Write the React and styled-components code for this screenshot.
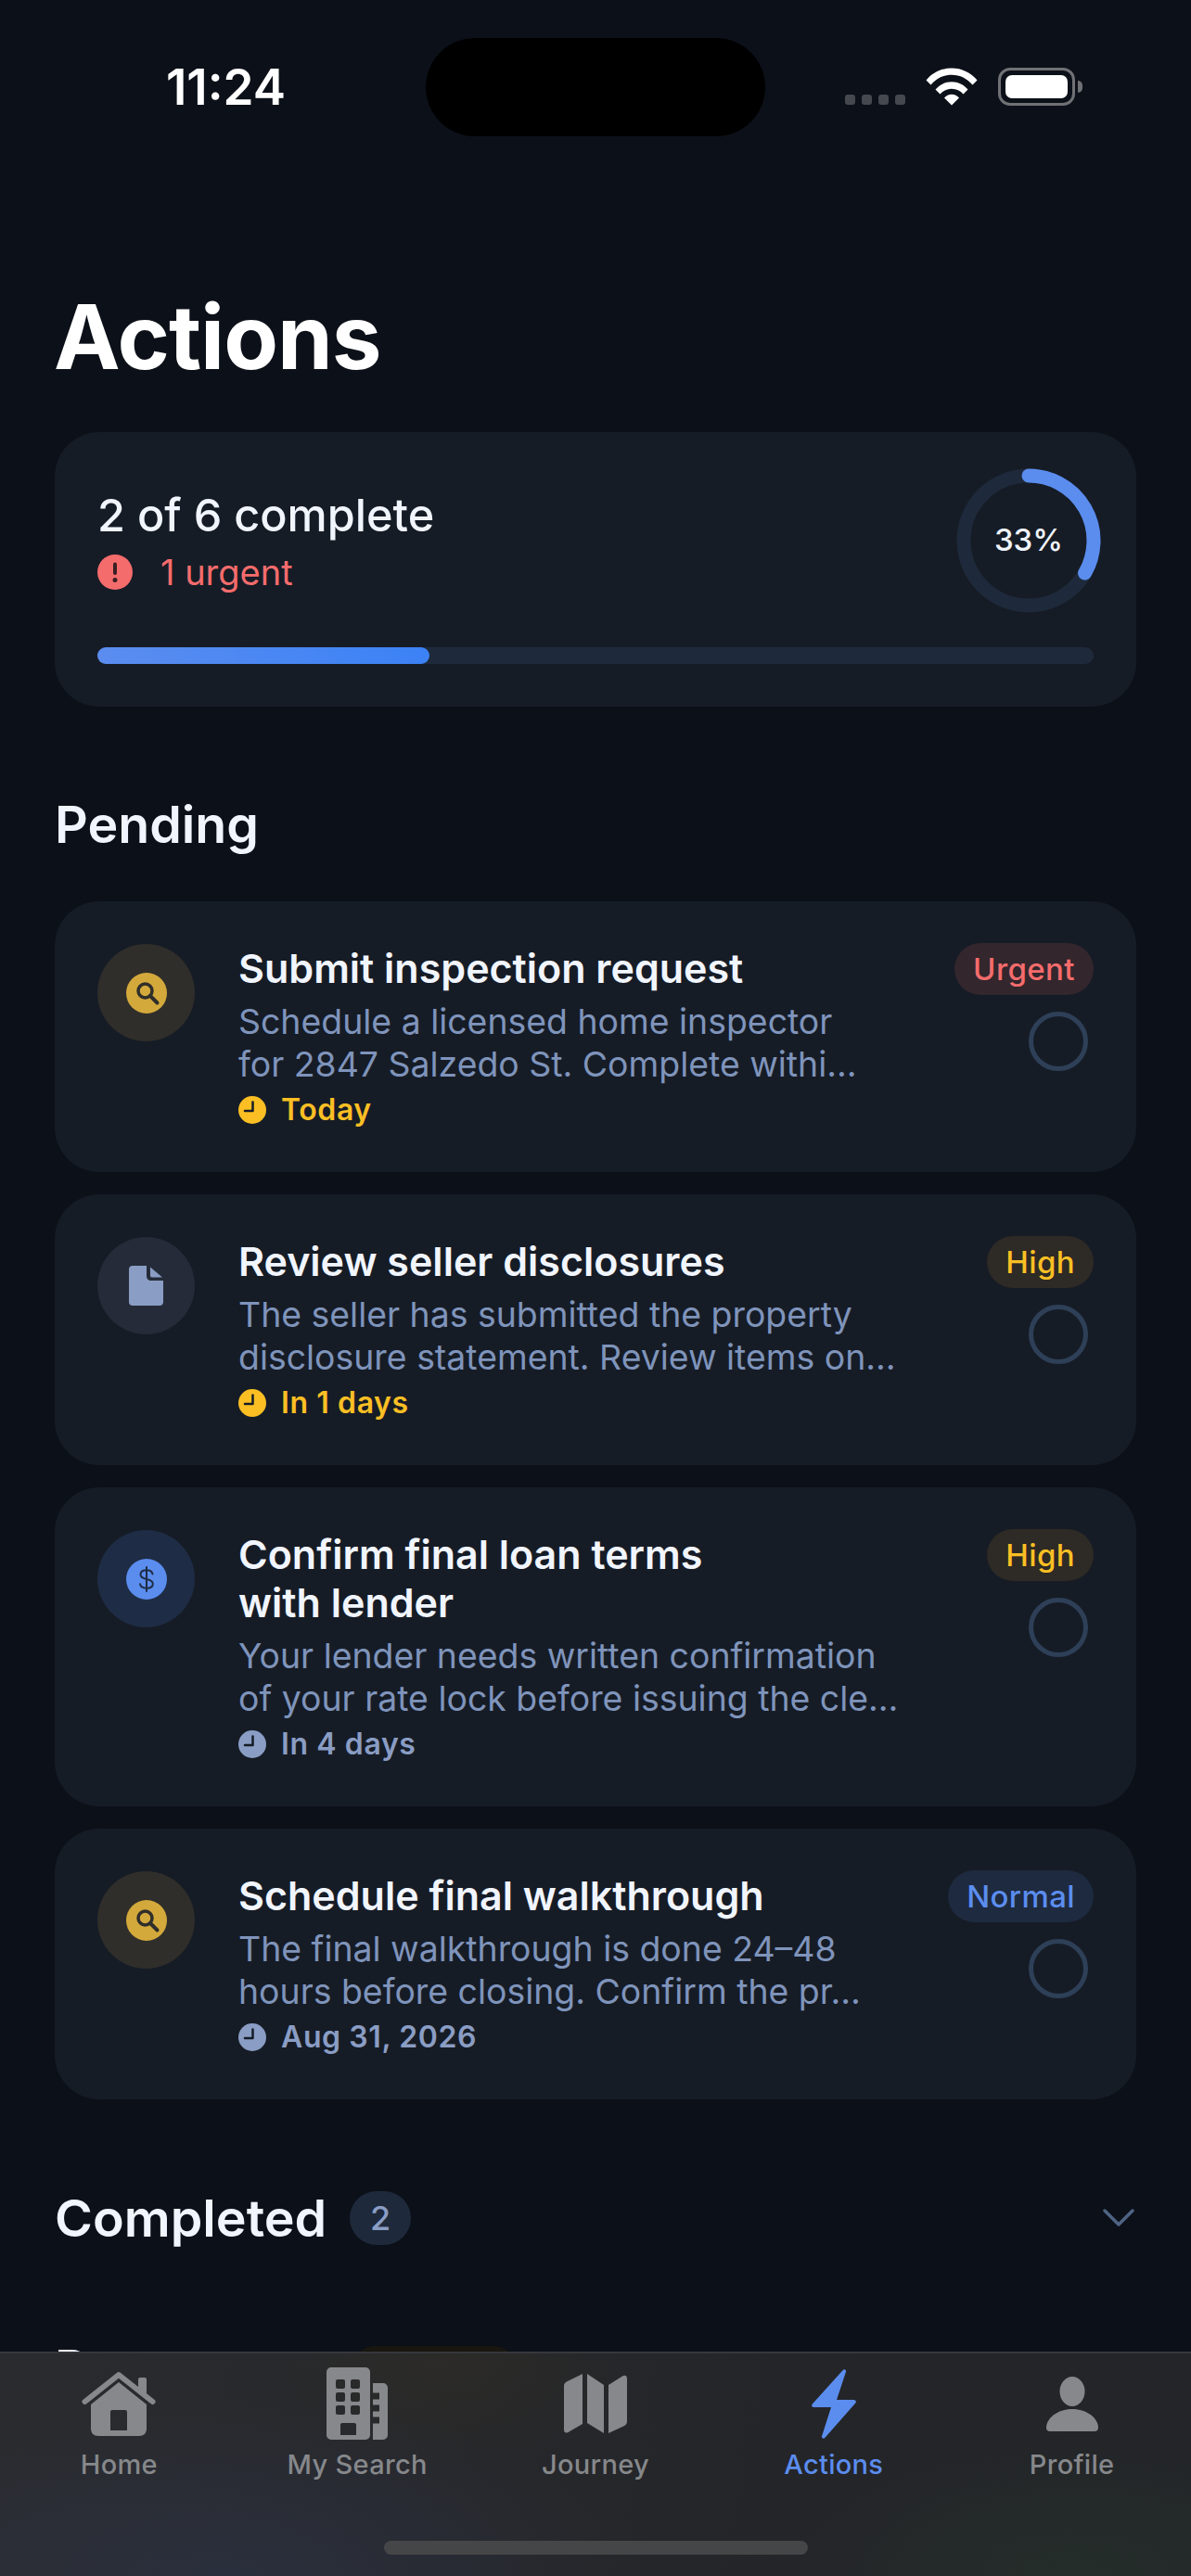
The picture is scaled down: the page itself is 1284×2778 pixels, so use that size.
import React from "react";
import styled, { createGlobalStyle } from "styled-components";

const GlobalStyle = createGlobalStyle`
  html, body {
    margin: 0;
    padding: 0;
    background: #0c1018;
  }
  * {
    box-sizing: border-box;
  }
`;

const Screen = styled.div`
  position: relative;
  width: 1284px;
  height: 2778px;
  overflow: hidden;
  background: #0c1018;
  color: #f1f5fd;
  font-family: Inter, "Noto Sans", sans-serif;
`;

const StatusBar = styled.div`
  display: flex;
  height: 147px;
  padding-top: 41px;
`;

const Time = styled.div`
  width: 459px;
  height: 106px;
  padding-left: 28px;
  display: flex;
  align-items: center;
  justify-content: center;
  font-size: 53px;
  font-weight: 600;
  color: #fff;
`;

const Island = styled.div`
  width: 366px;
  height: 106px;
  border-radius: 53px;
  background: #000;
`;

const StatusIcons = styled.div`
  display: flex;
  align-items: flex-start;
  padding: 32px 0 0 86px;
`;

const Dots = styled.div`
  display: flex;
  gap: 7px;
  margin-top: 29px;
  margin-right: 22px;
`;

const Dot = styled.span`
  width: 11px;
  height: 11px;
  border-radius: 3px;
  background: #45484e;
`;

const Battery = styled.div`
  position: relative;
  width: 83px;
  height: 41px;
  margin-left: 22px;
  padding: 5px;
  border: 3px solid #6f7175;
  border-radius: 13px;

  &::before {
    content: "";
    display: block;
    height: 100%;
    border-radius: 7px;
    background: #fff;
  }

  &::after {
    content: "";
    position: absolute;
    right: -11px;
    top: 11px;
    width: 5px;
    height: 13px;
    border-radius: 0 5px 5px 0;
    background: #6f7175;
  }
`;

const Main = styled.main`
  padding: 0 59px;
`;

const Title = styled.h1`
  margin: 158px 0 0 -1px;
  font-size: 96px;
  line-height: 116px;
  font-weight: 700;
  color: #fff;
  letter-spacing: -1px;
`;

const Card = styled.div`
  background: #161c26;
  border-radius: 48px;
`;

const Summary = styled(Card)`
  margin-top: 45px;
  height: 296px;
  padding: 39px 46px 0;
`;

const SummaryTop = styled.div`
  display: flex;
  justify-content: space-between;
  align-items: flex-start;
`;

const SummaryText = styled.div`
  padding-top: 22px;
`;

const SummaryCount = styled.div`
  font-size: 48.6px;
  line-height: 58px;
  font-weight: 500;
`;

const UrgentLine = styled.div`
  display: flex;
  align-items: center;
  gap: 30px;
  margin-top: 8px;
  font-size: 38px;
  line-height: 48px;
  color: #f56c6c;
`;

const Ring = styled.div`
  position: relative;
  width: 156px;
  height: 156px;
  margin-right: -8px;
`;

const RingLabel = styled.div`
  position: absolute;
  inset: 0;
  padding-bottom: 2px;
  display: flex;
  align-items: center;
  justify-content: center;
  font-size: 33px;
  font-weight: 500;
`;

const Track = styled.div`
  height: 18px;
  margin-top: 37px;
  border-radius: 9px;
  background: #1e2a3b;
`;

const TrackFill = styled.div`
  height: 100%;
  border-radius: 9px;
  background: linear-gradient(90deg, #5b8def, #3b82f6);
`;

const SectionTitle = styled.h2`
  margin: 0;
  font-size: 55.5px;
  line-height: 72px;
  font-weight: 600;
  color: #f1f5fd;
`;

const PendingTitle = styled(SectionTitle)`
  margin-top: 91px;
`;

const TaskList = styled.div`
  display: flex;
  flex-direction: column;
  gap: 24px;
  margin-top: 47px;
`;

const TaskCard = styled(Card)`
  display: flex;
  padding: 46px;
`;

const TaskIcon = styled.div`
  flex: none;
  display: flex;
  align-items: center;
  justify-content: center;
  width: 105px;
  height: 105px;
  border-radius: 50%;
  background: ${(p) => p.$bg};
`;

const TaskBody = styled.div`
  flex: none;
  width: 707px;
  margin-left: 47px;
`;

const TaskTitle = styled.div`
  max-width: 585px;
  font-size: 43px;
  line-height: 52px;
  font-weight: 600;
  color: #f1f5fd;
`;

const TaskDesc = styled.div`
  margin-top: 9px;
  font-size: 37.4px;
  line-height: 46px;
  color: #7f94bb;
`;

const DescLine = styled.div`
  white-space: nowrap;
`;

const Due = styled.div`
  display: flex;
  align-items: center;
  gap: 16px;
  margin-top: 5px;
  font-size: 32px;
  line-height: 42px;
  font-weight: 600;
  letter-spacing: 0.6px;
  color: ${(p) => p.$color};
`;

const TaskSide = styled.div`
  flex: 1;
  display: flex;
  flex-direction: column;
  align-items: flex-end;
`;

const Badge = styled.div`
  height: 56px;
  margin-top: -1px;
  padding: 0 20px;
  border-radius: 28px;
  display: flex;
  align-items: center;
  font-size: 33px;
  font-weight: 500;
  letter-spacing: 0.4px;
  color: ${(p) => p.$color};
  background: ${(p) => p.$bg};
`;

const Check = styled.div`
  width: 64px;
  height: 64px;
  margin: 18px 6px 0 0;
  border: 5px solid #2e4058;
  border-radius: 50%;
`;

const CompletedRow = styled.div`
  display: flex;
  align-items: center;
  margin-top: 92px;
`;

const CountPill = styled.div`
  display: flex;
  align-items: center;
  justify-content: center;
  width: 66px;
  height: 58px;
  margin-left: 25px;
  border-radius: 29px;
  background: #1e2a3b;
  color: #8a9dc4;
  font-size: 36px;
  font-weight: 500;
`;

const Chevron = styled.div`
  margin-left: auto;
  margin-right: 2px;
  display: flex;
  color: #4f6484;
`;

const DocumentsRow = styled.div`
  display: flex;
  align-items: center;
  margin-top: 90px;
`;

const DocumentsBadge = styled.div`
  width: 176px;
  height: 48px;
  margin-left: 14px;
  border-radius: 24px;
  background: #18160f;
`;

const TabBar = styled.nav`
  position: absolute;
  left: 0;
  right: 0;
  bottom: 0;
  height: 242px;
  display: grid;
  grid-template-columns: repeat(5, 1fr);
  align-items: start;
  padding-top: 15px;
  border-top: 2px solid #35373b;
  background:
    radial-gradient(200px 130px at 483px 0, rgba(70, 58, 20, 0.14), transparent),
    radial-gradient(460px 190px at 240px 100%, rgba(48, 62, 100, 0.3), transparent),
    radial-gradient(320px 150px at 1160px 100%, rgba(40, 72, 50, 0.24), transparent),
    linear-gradient(100deg, #2a2b2e, #242528 70%, #232528);
`;

const Tab = styled.div`
  display: flex;
  flex-direction: column;
  align-items: center;
  color: ${(p) => (p.$active ? "#5b8def" : "#86888b")};
`;

const TabIcon = styled.div`
  height: 78px;
  display: flex;
  align-items: center;
  justify-content: center;
`;

const TabLabel = styled.div`
  margin-top: 7px;
  font-size: 29px;
  line-height: 40px;
  font-weight: 500;
  letter-spacing: 0.3px;
`;

const HomeIndicator = styled.div`
  position: absolute;
  left: 414px;
  bottom: 23px;
  width: 457px;
  height: 15px;
  border-radius: 8px;
  background: #454648;
`;

const WifiIcon = () => (
  <svg width="56" height="41" viewBox="0 0 56 41" fill="#fff">
    <path d="M0.5 13.5C7.5 5.2 17 0.5 28 0.5s20.5 4.700 27.500 13l-5 5C44.700 11.700 37 7.700 28 7.700S11.300 11.700 5.500 18.500z" />
    <path d="M10.500 23.500C15 18.200 21 15.200 28 15.200s13 3 17.500 8.300l-5 5C37.200 24.800 33 22.700 28 22.700s-9.200 2.100-12.500 5.800z" />
    <path d="M20 32.500c2-2.300 4.900-3.800 8-3.800s6 1.500 8 3.800l-8 8z" />
  </svg>
);

const AlertIcon = () => (
  <svg width="38" height="38" viewBox="0 0 38 38">
    <circle cx="19" cy="19" r="19" fill="#f56c6c" />
    <rect x="17" y="8.500" width="4" height="13.500" rx="2" fill="#3a1f24" />
    <circle cx="19" cy="27.500" r="2.500" fill="#3a1f24" />
  </svg>
);

const ProgressRing = () => (
  <svg width="156" height="156" viewBox="0 0 156 156" fill="none">
    <circle cx="78" cy="78" r="70" stroke="#1e2a3b" strokeWidth="15" />
    <path d="M78 8A70 70 0 0 1 138.600 113" stroke="#5b8def" strokeWidth="15" strokeLinecap="round" />
  </svg>
);

const SearchIcon = () => (
  <svg width="44" height="44" viewBox="0 0 44 44" fill="none">
    <circle cx="22" cy="22" r="22" fill="#d4a93c" />
    <circle cx="20.500" cy="19.500" r="7.500" stroke="#2f2e2a" strokeWidth="3.500" />
    <path d="M26 25l7.500 7.500" stroke="#2f2e2a" strokeWidth="4" strokeLinecap="round" />
  </svg>
);

const DocIcon = () => (
  <svg width="37" height="43" viewBox="0 0 37 43" fill="#8a9dc4">
    <path d="M4 0h15v11c0 3 2 5 5 5h13v23c0 2.500-1.500 4-4 4H4c-2.500 0-4-1.500-4-4V4c0-2.500 1.500-4 4-4z" />
    <path d="M23 1.500L36 12.500H25c-1.300 0-2-.7-2-2z" />
  </svg>
);

const DollarIcon = () => (
  <svg width="44" height="44" viewBox="0 0 44 44" fill="none">
    <circle cx="22" cy="22" r="22" fill="#5b8def" />
    <path
      d="M28.500 16.500c-.5-2.700-3-4.200-6.500-4.200-3.800 0-6.500 1.800-6.500 4.800 0 3 2.500 4.100 6.500 4.900s6.800 1.900 6.800 5c0 3.100-2.900 4.800-6.800 4.800-3.800 0-6.500-1.700-7-4.600M22 9v26"
      stroke="#1e2c45"
      strokeWidth="2"
      strokeLinecap="round"
    />
  </svg>
);

const ClockIcon = ({ color }) => (
  <svg width="30" height="30" viewBox="0 0 30 30" fill="none">
    <circle cx="15" cy="15" r="15" fill={color} />
    <path d="M15.500 6.500v9.500H7" stroke="#161c26" strokeWidth="2.500" strokeLinecap="round" strokeLinejoin="round" />
  </svg>
);

const ChevronDown = () => (
  <svg width="34" height="22" viewBox="0 0 34 22" fill="none">
    <path d="M2 3l15 15L32 3" stroke="currentColor" strokeWidth="3.500" strokeLinecap="round" strokeLinejoin="round" />
  </svg>
);

const HomeGlyph = () => (
  <svg width="80" height="70" viewBox="0 0 80 70" fill="currentColor">
    <path d="M3.500 33L40 4l36.500 29" fill="none" stroke="currentColor" strokeWidth="6" strokeLinecap="round" strokeLinejoin="round" />
    <rect x="61" y="7" width="9" height="18" rx="2" />
    <path
      fillRule="evenodd"
      d="M40 12l30 24v26c0 5-3 8-8 8H18c-5 0-8-3-8-8V36zM33 42a2 2 0 0 0-2 2v20h18V44a2 2 0 0 0-2-2z"
    />
  </svg>
);

const BuildingGlyph = () => (
  <svg width="66" height="78" viewBox="0 0 66 78" fill="currentColor">
    <path
      fillRule="evenodd"
      d="M5 0h37a5 5 0 0 1 5 5v68a5 5 0 0 1-5 5H5a5 5 0 0 1-5-5V5a5 5 0 0 1 5-5zM12 13a2 2 0 0 0-2 2v6a2 2 0 0 0 2 2h6a2 2 0 0 0 2-2v-6a2 2 0 0 0-2-2zM28 13a2 2 0 0 0-2 2v6a2 2 0 0 0 2 2h6a2 2 0 0 0 2-2v-6a2 2 0 0 0-2-2zM12 27a2 2 0 0 0-2 2v6a2 2 0 0 0 2 2h6a2 2 0 0 0 2-2v-6a2 2 0 0 0-2-2zM28 27a2 2 0 0 0-2 2v6a2 2 0 0 0 2 2h6a2 2 0 0 0 2-2v-6a2 2 0 0 0-2-2zM12 41a2 2 0 0 0-2 2v6a2 2 0 0 0 2 2h6a2 2 0 0 0 2-2v-6a2 2 0 0 0-2-2zM28 41a2 2 0 0 0-2 2v6a2 2 0 0 0 2 2h6a2 2 0 0 0 2-2v-6a2 2 0 0 0-2-2zM17 60a2 2 0 0 0-2 2v11h17V62a2 2 0 0 0-2-2z"
    />
    <path
      fillRule="evenodd"
      d="M50 17h11a5 5 0 0 1 5 5v51a5 5 0 0 1-5 5H50V60.500h7v-7h-7v-6h7v-7h-7v-6h7v-7h-7z"
    />
  </svg>
);

const MapGlyph = () => (
  <svg width="68" height="64" viewBox="0 0 68 64" fill="currentColor">
    <path d="M20 0v54L4.500 63C2 64.500 0 63 0 60.500V13.500c0-2.500.8-3.800 2.800-5z" />
    <path d="M25 0l18 12v52L25 53z" />
    <path d="M48 12L63 2.500C65.800.8 68 2 68 5v46c0 2.500-.8 3.800-2.800 5L48 64z" />
  </svg>
);

const BoltGlyph = () => (
  <svg width="48" height="75" viewBox="0 0 48 75" fill="currentColor">
    <path d="M33.500 1.200C35 -.5 37.500.5 37 2.800L27 33h18.500c2 0 3 2 1.800 3.600L14.500 73.800c-1.600 1.700-4 .6-3.500-1.600L21 41H2.500C.5 41-.5 39 .8 37.400z" />
  </svg>
);

const PersonGlyph = () => (
  <svg width="56" height="59" viewBox="0 0 56 59" fill="currentColor">
    <ellipse cx="28" cy="16" rx="13.500" ry="16" />
    <path d="M28 35c16 0 28 10 28 20 0 2.500-1.500 4-4 4H4c-2.500 0-4-1.500-4-4 0-10 12-20 28-20z" />
  </svg>
);

const tasks = [
  {
    title: "Submit inspection request",
    desc: ["Schedule a licensed home inspector", "for 2847 Salzedo St. Complete withi…"],
    due: "Today",
    dueColor: "#fbbf24",
    iconBg: "#2f2e2a",
    icon: <SearchIcon />,
    badge: "Urgent",
    badgeColor: "#f56c6c",
    badgeBg: "#33262d",
  },
  {
    title: "Review seller disclosures",
    desc: ["The seller has submitted the property", "disclosure statement. Review items on…"],
    due: "In 1 days",
    dueColor: "#fbbf24",
    iconBg: "#252b38",
    icon: <DocIcon />,
    badge: "High",
    badgeColor: "#fbbf24",
    badgeBg: "#2e2a25",
  },
  {
    title: "Confirm final loan terms with lender",
    desc: ["Your lender needs written confirmation", "of your rate lock before issuing the cle…"],
    due: "In 4 days",
    dueColor: "#8a9dc4",
    iconBg: "#1e2c45",
    icon: <DollarIcon />,
    badge: "High",
    badgeColor: "#fbbf24",
    badgeBg: "#2e2a25",
  },
  {
    title: "Schedule final walkthrough",
    desc: ["The final walkthrough is done 24–48", "hours before closing. Confirm the pr…"],
    due: "Aug 31, 2026",
    dueColor: "#8a9dc4",
    iconBg: "#2f2e2a",
    icon: <SearchIcon />,
    badge: "Normal",
    badgeColor: "#5b8def",
    badgeBg: "#1e2a3f",
  },
];

const tabs = [
  { label: "Home", icon: <HomeGlyph /> },
  { label: "My Search", icon: <BuildingGlyph /> },
  { label: "Journey", icon: <MapGlyph /> },
  { label: "Actions", icon: <BoltGlyph />, active: true },
  { label: "Profile", icon: <PersonGlyph /> },
];

const App = () => {
  return (
    <Screen>
      <GlobalStyle />
      <StatusBar>
        <Time>11:24</Time>
        <Island />
        <StatusIcons>
          <Dots>
            <Dot />
            <Dot />
            <Dot />
            <Dot />
          </Dots>
          <WifiIcon />
          <Battery />
        </StatusIcons>
      </StatusBar>

      <Main>
        <Title>Actions</Title>

        <Summary>
          <SummaryTop>
            <SummaryText>
              <SummaryCount>2 of 6 complete</SummaryCount>
              <UrgentLine>
                <AlertIcon />1 urgent
              </UrgentLine>
            </SummaryText>
            <Ring>
              <ProgressRing />
              <RingLabel>33%</RingLabel>
            </Ring>
          </SummaryTop>
          <Track>
            <TrackFill style={{ width: `${(2 / 6) * 100}%` }} />
          </Track>
        </Summary>

        <PendingTitle>Pending</PendingTitle>
        <TaskList>
          {tasks.map((t) => (
            <TaskCard key={t.title}>
              <TaskIcon $bg={t.iconBg}>{t.icon}</TaskIcon>
              <TaskBody>
                <TaskTitle>{t.title}</TaskTitle>
                <TaskDesc>
                  {t.desc.map((line) => (
                    <DescLine key={line}>{line}</DescLine>
                  ))}
                </TaskDesc>
                <Due $color={t.dueColor}>
                  <ClockIcon color={t.dueColor} />
                  {t.due}
                </Due>
              </TaskBody>
              <TaskSide>
                <Badge $color={t.badgeColor} $bg={t.badgeBg}>
                  {t.badge}
                </Badge>
                <Check />
              </TaskSide>
            </TaskCard>
          ))}
        </TaskList>

        <CompletedRow>
          <SectionTitle>Completed</SectionTitle>
          <CountPill>2</CountPill>
          <Chevron>
            <ChevronDown />
          </Chevron>
        </CompletedRow>

        <DocumentsRow>
          <SectionTitle>Documents</SectionTitle>
          <DocumentsBadge />
        </DocumentsRow>
      </Main>

      <TabBar>
        {tabs.map((tab) => (
          <Tab key={tab.label} $active={tab.active}>
            <TabIcon>{tab.icon}</TabIcon>
            <TabLabel>{tab.label}</TabLabel>
          </Tab>
        ))}
        <HomeIndicator />
      </TabBar>
    </Screen>
  );
};

export default App;
